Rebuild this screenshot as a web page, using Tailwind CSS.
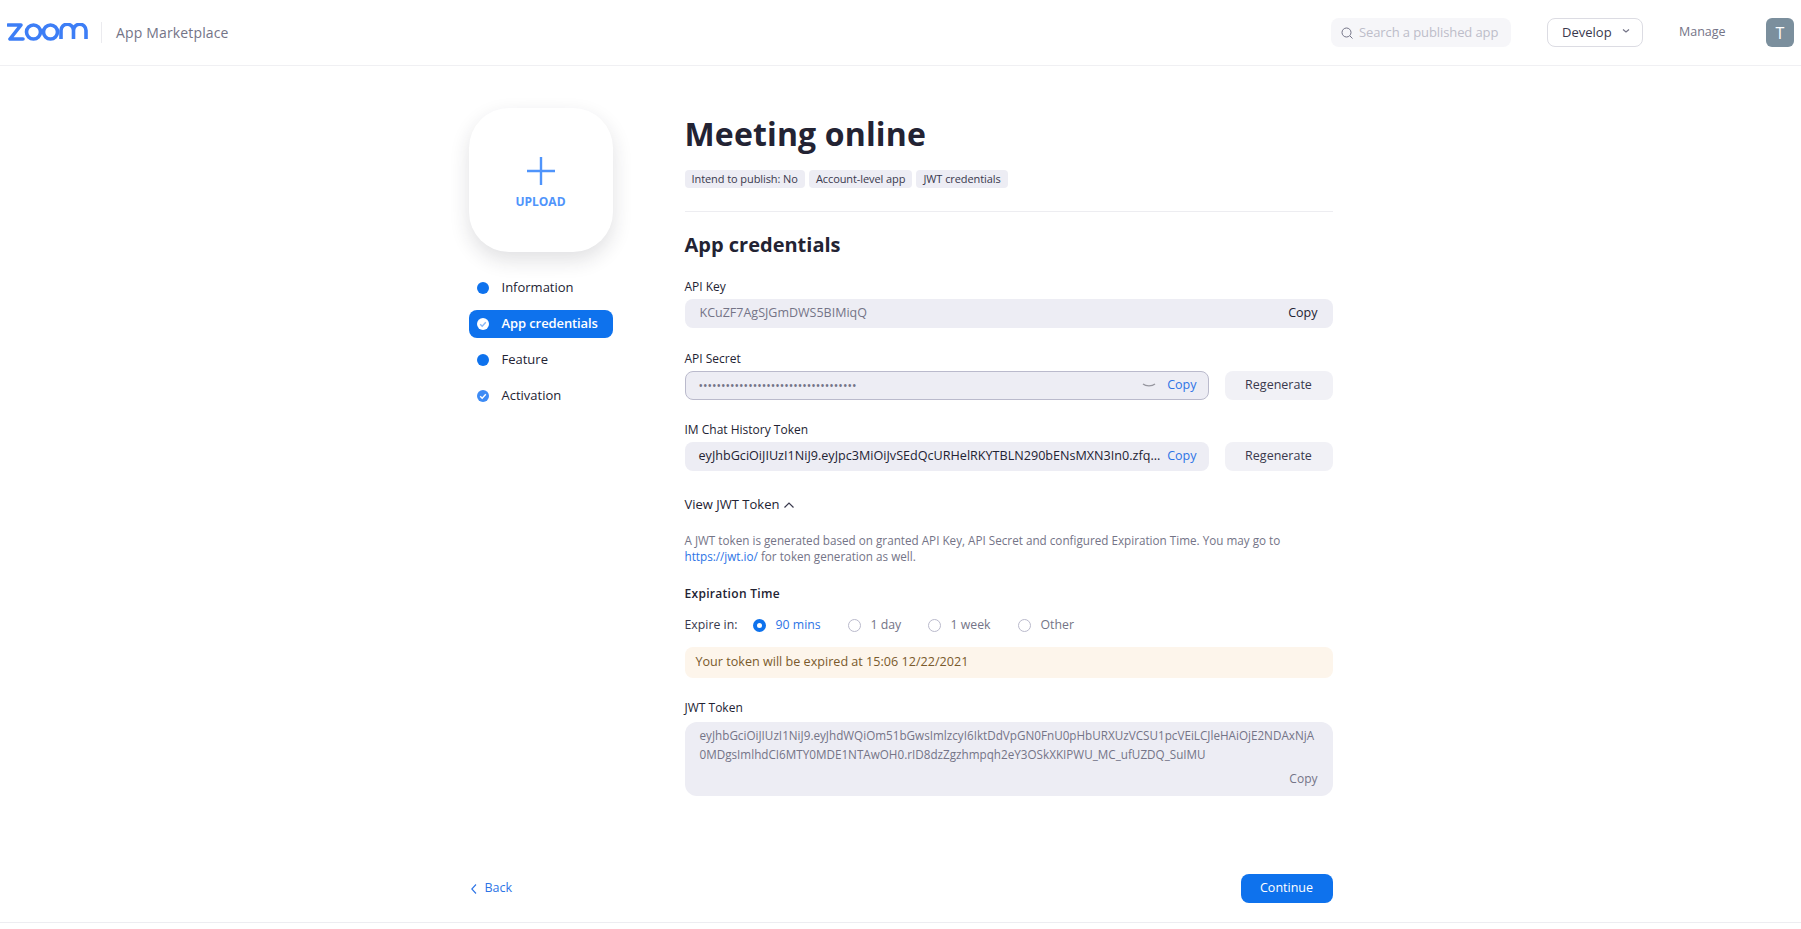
<!DOCTYPE html>
<html lang="en">
<head>
  <meta charset="UTF-8" />
  <meta name="viewport" content="width=device-width, initial-scale=1" />
  <title>App credentials</title>
  <script src="https://cdn.jsdelivr.net/npm/@tailwindcss/browser@4"></script>
</head>

<body class="bg-white font-['Open_Sans',sans-serif] text-[#232333] h-[929px] overflow-hidden">

  <!-- Top bar -->
  <header class="h-[66px] border-b border-[#f0f0f3] flex items-center pl-[7px] pr-[7px]">
    <svg class="w-[81px] h-[18px] mt-[-1px]" viewBox="0 0 81 18" fill="none" stroke="#3d7ef6" stroke-width="3.6">
      <polyline points="1,2 14,2 3,16 16,16" stroke-linejoin="round" stroke-linecap="round"/>
      <circle cx="26.5" cy="9" r="7"/>
      <circle cx="43.5" cy="9" r="7"/>
      <path d="M54 16V7.500a5 5 0 0 1 12.500 0V16M66.500 7.500a5 5 0 0 1 12.500 0V16"/>
    </svg>
    <div class="w-px h-[21px] bg-[#ebebef] ml-[13px]"></div>
    <span class="ml-[14px] text-[14px] tracking-[0.15px] text-[#747487]">App Marketplace</span>

    <div class="ml-auto w-[180px] h-[29px] rounded-lg bg-[#f6f6f9] flex items-center pl-[10px]">
      <svg class="w-3 h-3" viewBox="0 0 12 12" fill="none" stroke="#747487" stroke-width="1"><circle cx="5.500" cy="5.500" r="4.500"/><path d="M9 9l2.500 2.500"/></svg>
      <span class="ml-[6px] text-[13px] tracking-[-0.1px] text-[#bdbdc9]">Search a published app</span>
    </div>
    <div class="ml-9 w-[96px] h-[29px] rounded-lg border border-[#dcdce3] flex items-center pl-[14px]">
      <span class="text-[13px] text-[#39394d]">Develop</span>
      <svg class="w-2 h-2 ml-[10px] mb-[3px]" viewBox="0 0 8 8" fill="none" stroke="#747487" stroke-width="1.200"><path d="M1 2.500l3 2.500 3-2.500"/></svg>
    </div>
    <span class="ml-9 w-[47px] text-[12.5px] text-[#747487]">Manage</span>
    <div class="ml-[40px] w-[28px] h-[29px] rounded-md bg-[#7b8f9d] text-white text-[16px] flex items-center justify-center">T</div>
  </header>

  <div class="w-[864px] mx-auto flex gap-[72px] pt-[42px]">

    <!-- Sidebar -->
    <aside class="w-[144px] shrink-0">
      <div class="h-[144px] rounded-[40px] bg-white shadow-[0_8px_20px_rgba(35,35,51,0.14)] flex flex-col items-center pt-[48px]">
        <svg class="w-[30px] h-[30px]" viewBox="0 0 30 30" stroke="#4f94fb" stroke-width="2.400"><path d="M15 1v28M1 15h28"/></svg>
        <span class="mt-[7px] text-[12px] font-bold text-[#4f94fb]">UPLOAD</span>
      </div>
      <nav class="mt-[22px] flex flex-col gap-2 text-[13px]">
        <div class="h-[28px] flex items-center pl-2 font-medium">
          <span class="w-3 h-3 rounded-full bg-[#0e72ed]"></span>
          <span class="ml-[13px]">Information</span>
        </div>
        <div class="h-[28px] flex items-center pl-2 rounded-lg bg-[#0e72ed] text-white font-semibold tracking-[-0.1px]">
          <svg class="w-3 h-3" viewBox="0 0 12 12"><circle cx="6" cy="6" r="6" fill="#fff"/><path d="M3.200 6.200l2 2 3.600-4" fill="none" stroke="#8ab8f5" stroke-width="1.400"/></svg>
          <span class="ml-[13px]">App credentials</span>
        </div>
        <div class="h-[28px] flex items-center pl-2 font-medium">
          <span class="w-3 h-3 rounded-full bg-[#0e72ed]"></span>
          <span class="ml-[13px]">Feature</span>
        </div>
        <div class="h-[28px] flex items-center pl-2 font-medium">
          <svg class="w-3 h-3" viewBox="0 0 12 12"><circle cx="6" cy="6" r="6" fill="#3d8bf5"/><path d="M3.200 6.200l2 2 3.600-4" fill="none" stroke="#fff" stroke-width="1.400"/></svg>
          <span class="ml-[13px]">Activation</span>
        </div>
      </nav>
    </aside>

    <!-- Main column -->
    <main class="w-[648px]">
      <h1 class="mt-1 text-[32px] leading-[44px] font-bold tracking-[0.15px]">Meeting online</h1>
      <div class="mt-[14px] flex gap-1 text-[11px] leading-[18px] tracking-[-0.08px] text-[#39394d]">
        <span class="h-[18px] px-[7px] rounded bg-[#ededf4]">Intend to publish: No</span>
        <span class="h-[18px] px-[7px] rounded bg-[#ededf4]">Account-level app</span>
        <span class="h-[18px] px-[7px] rounded bg-[#ededf4]">JWT credentials</span>
      </div>
      <div class="mt-[23px] border-t border-[#ededf1]"></div>

      <h2 class="mt-[19px] text-[20px] leading-7 font-bold">App credentials</h2>

      <label class="block mt-5 text-[12px] leading-4 font-medium">API Key</label>
      <div class="mt-1 h-[29px] rounded-lg bg-[#ededf4] flex items-center justify-between pl-[15px] pr-[15px] text-[12.5px]">
        <span class="text-[#747487]">KCuZF7AgSJGmDWS5BIMiqQ</span>
        <span class="font-medium">Copy</span>
      </div>

      <label class="block mt-[23px] text-[12px] leading-4 font-medium">API Secret</label>
      <div class="mt-1 flex gap-4">
        <div class="flex-1 h-[29px] rounded-lg bg-[#ededf4] border border-[#babacc] flex items-center pl-[13px] pr-[11px] text-[12.5px]">
          <span class="text-[12px] text-[#747487]">•••••••••••••••••••••••••••••••••••</span>
          <svg class="ml-auto w-[14px] h-2" viewBox="0 0 14 8" fill="none" stroke="#96969f" stroke-width="1.300"><path d="M1 2c3 2.500 9 2.500 12 0"/></svg>
          <span class="ml-[11px] font-medium text-[#2d74e6]">Copy</span>
        </div>
        <button class="w-[108px] h-[29px] rounded-lg bg-[#f1f1f6] text-[12.5px] text-[#39394d]">Regenerate</button>
      </div>

      <label class="block mt-[22px] text-[12px] leading-4 font-medium">IM Chat History Token</label>
      <div class="mt-1 flex gap-4">
        <div class="flex-1 h-[29px] rounded-lg bg-[#ededf4] flex items-center pl-[14px] pr-[12px] text-[12.6px]">
          <span class="whitespace-nowrap">eyJhbGciOiJIUzI1NiJ9.eyJpc3MiOiJvSEdQcURHelRKYTBLN290bENsMXN3In0.zfq...</span>
          <span class="ml-auto text-[12.5px] font-medium text-[#2d74e6]">Copy</span>
        </div>
        <button class="w-[108px] h-[29px] rounded-lg bg-[#f1f1f6] text-[12.5px] text-[#39394d]">Regenerate</button>
      </div>

      <div class="mt-[25px] h-[18px] flex items-center text-[13px] font-medium">
        View JWT Token
        <svg class="w-[10px] h-[6px] ml-[5px]" viewBox="0 0 10 6" fill="none" stroke="#39394d" stroke-width="1.200"><path d="M.500 5.500L5 1l4.500 4.500"/></svg>
      </div>

      <p class="mt-[18px] text-[11.7px] leading-4 text-[#747487]">A JWT token is generated based on granted API Key, API Secret and configured Expiration Time. You may go to<br /><a class="text-[#2d74e6]">https://jwt.io/</a> for token generation as well.</p>

      <div class="mt-[22px] text-[12px] leading-4 font-semibold tracking-[0.3px]">Expiration Time</div>

      <div class="mt-[15px] h-4 flex items-center text-[12.3px] text-[#747487]">
        <span class="text-[#39394d] w-[68px]">Expire in:</span>
        <span class="w-[13px] h-[13px] rounded-full border-[4px] border-[#0e72ed]"></span>
        <span class="ml-[10px] w-[72px] text-[#2d74e6]">90 mins</span>
        <span class="w-[13px] h-[13px] rounded-full border border-[#babacc]"></span>
        <span class="ml-[10px] w-[57px]">1 day</span>
        <span class="w-[13px] h-[13px] rounded-full border border-[#babacc]"></span>
        <span class="ml-[10px] w-[67px]">1 week</span>
        <span class="w-[13px] h-[13px] rounded-full border border-[#babacc]"></span>
        <span class="ml-[10px]">Other</span>
      </div>

      <div class="mt-[14px] h-[31px] rounded-lg bg-[#fdf5eb] flex items-center pl-[11px] text-[12.6px] text-[#7a5a2c]">Your token will be expired at 15:06 12/22/2021</div>

      <div class="mt-[22px] text-[12px] leading-4 font-medium">JWT Token</div>
      <div class="mt-[6px] h-[74px] rounded-xl bg-[#ededf4] pl-[15px] pr-[10px] pt-1 text-[11.7px] leading-[19px] text-[#747487] relative">
        <div class="whitespace-nowrap">eyJhbGciOiJIUzI1NiJ9.eyJhdWQiOm51bGwsImlzcyI6IktDdVpGN0FnU0pHbURXUzVCSU1pcVEiLCJleHAiOjE2NDAxNjA<br />0MDgsImlhdCI6MTY0MDE1NTAwOH0.rID8dzZgzhmpqh2eY3OSkXKIPWU_MC_ufUZDQ_SuIMU</div>
        <span class="absolute right-[15px] bottom-[8px] text-[12px] font-medium">Copy</span>
      </div>

      <div class="mt-[78px] flex items-center justify-between -ml-[216px]">
        <span class="ml-[2px] flex items-center text-[12.5px] text-[#2d74e6]">
          <svg class="w-[6px] h-[10px] mr-[8px]" viewBox="0 0 6 10" fill="none" stroke="#2d74e6" stroke-width="1.100"><path d="M5 .500L.800 5 5 9.500"/></svg>
          Back
        </span>
        <button class="w-[92px] h-[29px] rounded-lg bg-[#0e72ed] text-white text-[12.5px] font-medium">Continue</button>
      </div>
    </main>
  </div>

  <div class="mt-[19px] border-t border-[#ededf1]"></div>

</body>
</html>
